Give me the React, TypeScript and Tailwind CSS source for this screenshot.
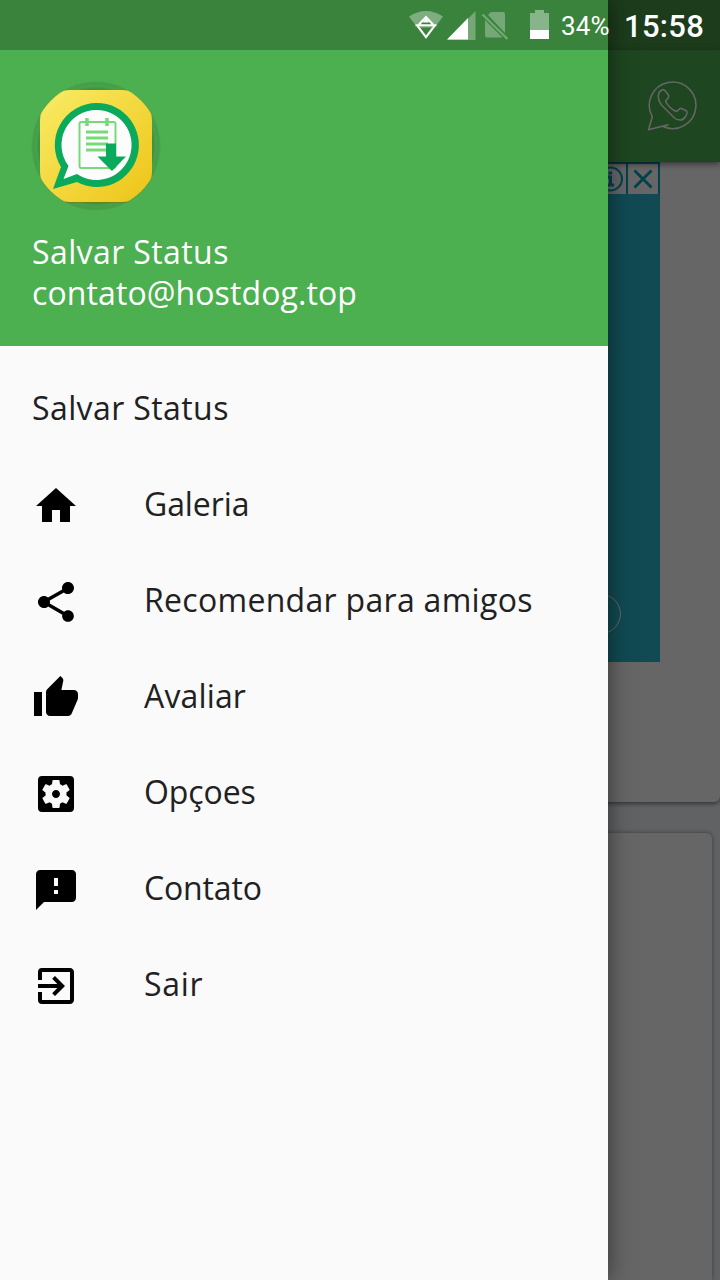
import {
  MdExitToApp,
  MdFeedback,
  MdHome,
  MdSettingsApplications,
  MdShare,
} from "react-icons/md";

function ThumbUpIcon({ className }: { className?: string }) {
  return (
    <svg viewBox="0 0 24 24" fill="currentColor" className={className}>
      <path d="M1 21h4V9H1v12zm22-11c0-1.1-.9-2-2-2h-6.31l.95-4.57.03-.32c0-.41-.17-.79-.44-1.06L14.17 1 7.59 7.59C7.22 7.95 7 8.45 7 9v10c0 1.1.9 2 2 2h9c.83 0 1.54-.5 1.84-1.22l3.02-7.05c.09-.23.14-.47.14-.73V10z" />
    </svg>
  );
}

const MENU = [
  { label: "Galeria", icon: MdHome, tracking: "tracking-[-0.1px]" },
  { label: "Recomendar para amigos", icon: MdShare, tracking: "tracking-[0.3px]" },
  { label: "Avaliar", icon: ThumbUpIcon, tracking: "tracking-[0.15px]" },
  { label: "Opçoes", icon: MdSettingsApplications, tracking: "tracking-[-0.1px]" },
  { label: "Contato", icon: MdFeedback, tracking: "tracking-[-0.15px]" },
  { label: "Sair", icon: MdExitToApp, tracking: "tracking-[0.7px]" },
];

function StatusBar() {
  return (
    <div className="absolute inset-x-0 top-0 z-30 flex h-[50px] pl-[409px] font-['Roboto',sans-serif] text-white">
      <svg width="34" height="50" viewBox="409 0 34 50" className="shrink-0">
        <path d="M409 16.5Q426 5.500 443 16.500L426 39Z" fill="#fff" fillOpacity=".35" />
        <path d="M418 25.500L426 16.500L434 25.500Z" fill="#3a833c" />
        <path d="M422.500 22.500L426 18L429.500 22.500Z" fill="#fff" />
        <path
          d="M415.500 25.200H436.500M417.500 26L426 37L434.500 26M419 24.500L426 17L433 24.500"
          fill="none"
          stroke="#fff"
          strokeWidth="2"
        />
        <path d="M420.500 27.500H431.500L426 35Z" fill="#3a833c" />
      </svg>
      <svg width="29" height="50" viewBox="447 0 29 50" className="ml-1 shrink-0">
        <path d="M447 40L475.500 11V40Z" fill="#fff" fillOpacity=".3" />
        <path d="M447 39.500L468 18V39.500Z" fill="#fff" />
      </svg>
      <svg width="27" height="50" viewBox="482 0 27 50" className="ml-1.5 shrink-0">
        <g opacity=".3">
          <path d="M488 15L491 12H503Q505 12 505 14V33Z" fill="#fff" />
          <path d="M485 20L502.500 37.500H487Q485 37.500 485 35.500Z" fill="#fff" />
          <path d="M482.500 14.500L507.500 39" stroke="#fff" strokeWidth="2.200" />
        </g>
      </svg>
      <svg width="19" height="50" viewBox="530 0 19 50" className="ml-[21px] shrink-0">
        <path d="M530 13H535V10H544V13H549V30H530Z" fill="#fff" fillOpacity=".4" />
        <path d="M530 30H549V39H530Z" fill="#fff" />
      </svg>
      <span className="ml-3 w-[63px] shrink-0 text-[26px] leading-[52px] tracking-[0.2px]">34%</span>
      <span className="shrink-0 text-[31px] leading-[53px] font-medium tracking-[0.3px]">15:58</span>
    </div>
  );
}

function AppLogo() {
  return (
    <svg width="140" height="140" viewBox="6 6 140 140">
      <defs>
        <linearGradient id="gold" x1="0" y1="0" x2="1" y2="1">
          <stop offset="0" stopColor="#f9ec66" />
          <stop offset="1" stopColor="#edc417" />
        </linearGradient>
        <clipPath id="round">
          <circle cx="76" cy="76" r="64" />
        </clipPath>
        <radialGradient id="halo">
          <stop offset=".88" stopColor="#000" stopOpacity=".18" />
          <stop offset=".93" stopColor="#000" stopOpacity=".07" />
          <stop offset=".97" stopColor="#000" stopOpacity=".1" />
          <stop offset="1" stopColor="#000" stopOpacity=".05" />
        </radialGradient>
      </defs>
      <circle cx="76" cy="76" r="64.500" fill="url(#halo)" />
      <g clipPath="url(#round)">
        <rect x="20" y="21" width="112" height="112" rx="30" fill="#6f7d16" fillOpacity=".7" />
        <rect x="20" y="20" width="112" height="112" rx="30" fill="url(#gold)" />
      </g>
      <path d="M77 33a42 42 0 1 1-20 79L33 119L41 97A42 42 0 0 1 77 33Z" fill="#0ba95b" />
      <path d="M77 40a35 35 0 1 1-20 64L43.500 109L48.500 96A35 35 0 0 1 77 40Z" fill="#fcfcfc" />
      <g fill="none" stroke="#76d97a">
        <rect x="59.500" y="52" width="36" height="46" rx="2" strokeWidth="2" />
        <path d="M66 62H88M66 68H88M66 74H88M66 80H88" strokeWidth="2.800" />
        <path d="M67 48V56M87 48V56" strokeWidth="3.500" />
      </g>
      <path d="M86 73.500H96V86.500H106L92 101L77.500 86.500H86Z" fill="#0ba95b" />
    </svg>
  );
}

function Drawer() {
  return (
    <aside className="absolute inset-y-0 left-0 z-20 flex w-[608px] flex-col bg-[#fafafa] shadow-[0_0_22px_rgba(0,0,0,0.5)]">
      <header className="h-[346px] bg-[#4caf50] text-white">
        <div className="h-[50px] bg-[#3a833c]" />
        <div className="pt-[26px] pl-[26px]">
          <AppLogo />
        </div>
        <div className="mt-[15px] pl-8 text-[32px] leading-[41px]">
          <p className="tracking-[0.4px]">Salvar Status</p>
          <p className="tracking-[0.1px]">contato@hostdog.top</p>
        </div>
      </header>
      <nav className="pt-[14px] text-[32px] text-[#212121]">
        <h2 className="flex h-24 items-center pl-8 tracking-[0.4px]">Salvar Status</h2>
        <ul>
          {MENU.map((item) => {
            const Icon = item.icon;
            return (
              <li key={item.label} className="flex h-24 items-center gap-16 pl-8">
                <Icon className="mt-1 size-12 shrink-0 text-black" />
                <span className={`whitespace-nowrap ${item.tracking}`}>{item.label}</span>
              </li>
            );
          })}
        </ul>
      </nav>
    </aside>
  );
}

function Page() {
  return (
    <div className="flex h-full flex-col bg-[#f0f5fa]">
      <div className="h-[50px] shrink-0 bg-[#489646]" />
      <div className="z-[1] flex h-28 shrink-0 items-center justify-end bg-[#4caf50] pr-[23px] shadow-[0_2px_6px_rgba(0,0,0,0.5)]">
        <svg
          width="50"
          height="50"
          viewBox="0 0 50 50"
          fill="none"
          stroke="#fff"
          strokeWidth="1.500"
          strokeLinejoin="round"
        >
          <path d="M5.300 35.700A23.300 23.300 0 1 1 16 45.500L21 43.800L1.500 48.800Z" />
          <path d="M11.300 15C11.500 12 13 10 14.700 9C16 8.500 17 8.500 18 9.500L21.500 14C23 17 19 18.500 18.500 20C20 24 25 29 29.700 30.500C31 30 32 27 34.500 27.300L39.500 30C41 32 39.500 34 38.500 35.500C37 38 35.500 39 33.500 39C31 39 29.500 38.500 28 37.500L14.700 24.300C12.500 21 11 18 11.300 15Z" />
        </svg>
      </div>
      <div className="h-[640px] shrink-0 rounded-br-md bg-white pl-[60px] shadow-[0_2px_4px_rgba(0,0,0,0.45)]">
        <div className="flex h-[500px] w-[600px] flex-col bg-[#2bb9d0]">
          <div className="flex h-8 justify-end text-[#00a3c4]">
            <div className="flex w-8 items-center justify-center border-t-2 border-current bg-white">
              <svg width="26" height="26" viewBox="0 0 26 26" fill="none" stroke="currentColor">
                <circle cx="13.500" cy="13" r="11.500" strokeWidth="2" />
                <path d="M10 11H13.500V19M10 19H17" strokeWidth="3" />
                <path d="M13.300 5.500V8.500" strokeWidth="3.500" />
              </svg>
            </div>
            <div className="flex w-[34px] items-center justify-center border-x-2 border-t-2 border-current bg-white">
              <svg width="20" height="20" viewBox="0 0 20 20" stroke="currentColor" strokeWidth="2.800">
                <path d="M1.500 1.500L18.500 18.500M18.500 1.500L1.500 18.500" />
              </svg>
            </div>
          </div>
          <div className="mt-[400px] ml-[521px] size-10 rounded-full border border-white" />
        </div>
      </div>
      <div className="mt-[31px] mr-2 flex-1 rounded-t-md bg-white shadow-[0_0_5px_rgba(0,0,0,0.4)]" />
    </div>
  );
}

export default function App() {
  return (
    <div className="relative h-[1280px] w-[720px] overflow-hidden font-['Open_Sans',sans-serif]">
      <Page />
      <div className="absolute inset-0 z-10 bg-black/60" />
      <Drawer />
      <StatusBar />
    </div>
  );
}
